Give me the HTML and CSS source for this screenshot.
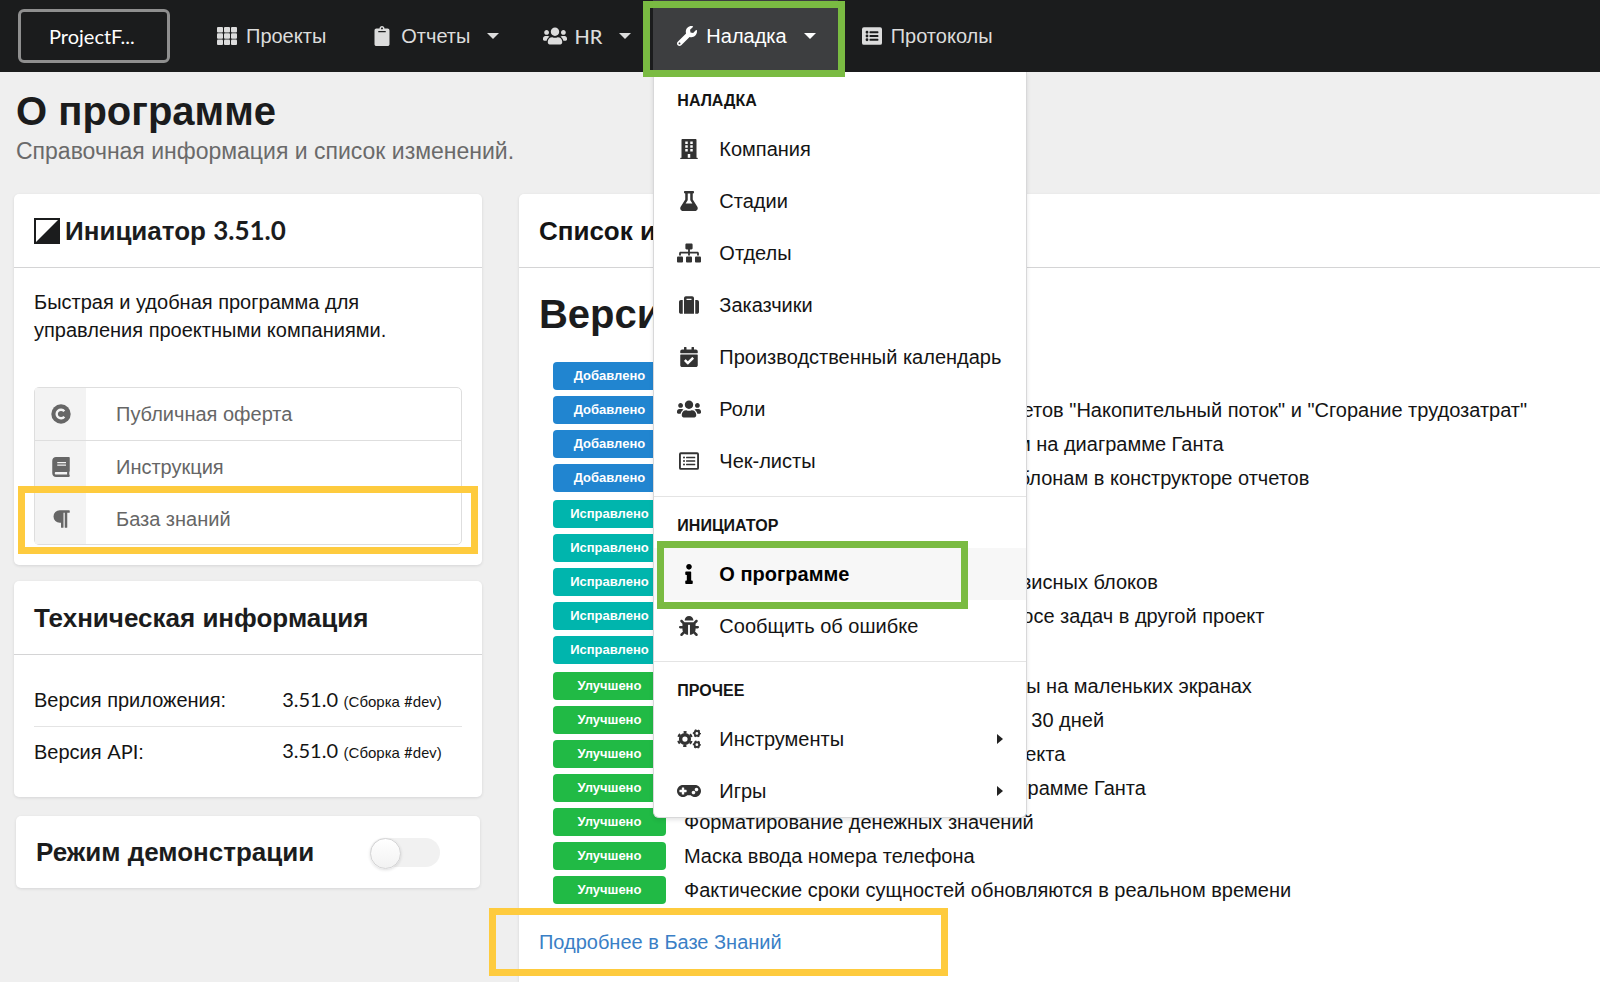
FILE: index.html
```html
<!DOCTYPE html>
<html lang="ru">
<head>
<meta charset="utf-8">
<title>О программе</title>
<link rel="stylesheet" href="styles.css">
</head>
<body>
<svg class="sprite" aria-hidden="true">
  <symbol id="i-grid" viewBox="-2 -1 24 20"><g><rect width="6" height="5.4" rx="1"/><rect x="7" width="6" height="5.4" rx="1"/><rect x="14" width="6" height="5.4" rx="1"/><rect y="6.3" width="6" height="5.4" rx="1"/><rect x="7" y="6.3" width="6" height="5.4" rx="1"/><rect x="14" y="6.3" width="6" height="5.4" rx="1"/><rect y="12.6" width="6" height="5.4" rx="1"/><rect x="7" y="12.6" width="6" height="5.4" rx="1"/><rect x="14" y="12.6" width="6" height="5.4" rx="1"/></g></symbol>
  <symbol id="i-clipboard" viewBox="0 0 384 512"><path d="M384 112v352c0 26.51-21.49 48-48 48H48c-26.51 0-48-21.49-48-48V112c0-26.51 21.49-48 48-48h80c0-35.29 28.71-64 64-64s64 28.71 64 64h80c26.51 0 48 21.49 48 48zM192 40c-13.255 0-24 10.745-24 24s10.745 24 24 24 24-10.745 24-24-10.745-24-24-24m96 114v-20a6 6 0 0 0-6-6H102a6 6 0 0 0-6 6v20a6 6 0 0 0 6 6h180a6 6 0 0 0 6-6z"/></symbol>
  <symbol id="i-users" viewBox="0 0 640 512"><path d="M96 224c35.3 0 64-28.7 64-64s-28.7-64-64-64-64 28.7-64 64 28.7 64 64 64zm448 0c35.3 0 64-28.7 64-64s-28.7-64-64-64-64 28.7-64 64 28.7 64 64 64zm32 32h-64c-17.6 0-33.5 7.1-45.1 18.6 40.3 22.1 68.9 62 75.1 109.4h66c17.7 0 32-14.3 32-32v-32c0-35.3-28.7-64-64-64zm-256 0c61.9 0 112-50.1 112-112S381.9 32 320 32 208 82.1 208 144s50.1 112 112 112zm76.8 32h-8.3c-20.8 10-43.9 16-68.5 16s-47.6-6-68.5-16h-8.3C179.6 288 128 339.6 128 403.2V432c0 26.5 21.5 48 48 48h288c26.5 0 48-21.5 48-48v-28.8c0-63.6-51.6-115.2-115.2-115.2zm-223.7-13.4C161.5 263.1 145.6 256 128 256H64c-35.3 0-64 28.7-64 64v32c0 17.7 14.3 32 32 32h65.9c6.3-47.4 34.9-87.3 75.2-109.4z"/></symbol>
  <symbol id="i-wrench" viewBox="0 0 512 512"><path d="M507.73 109.1c-2.24-9.03-13.54-12.09-20.12-5.51l-74.36 74.36-67.88-11.31-11.31-67.88 74.36-74.36c6.62-6.62 3.43-17.9-5.66-20.16-47.38-11.74-99.55.91-136.58 37.93-39.64 39.64-50.55 97.1-34.05 147.2L18.74 402.76c-24.99 24.99-24.99 65.51 0 90.5 24.99 24.99 65.51 24.99 90.5 0l213.21-213.21c50.12 16.71 107.47 5.68 147.37-34.22 37.07-37.07 49.7-89.32 37.91-136.73zM64 472c-13.25 0-24-10.75-24-24 0-13.26 10.75-24 24-24s24 10.74 24 24c0 13.25-10.75 24-24 24z"/></symbol>
  <symbol id="i-list-solid" viewBox="0 0 512 512"><path fill-rule="evenodd" d="M48 32h416a48 48 0 0 1 48 48v352a48 48 0 0 1-48 48H48a48 48 0 0 1-48-48V80a48 48 0 0 1 48-48zM92 160a36 36 0 1 0 72 0 36 36 0 1 0-72 0zM92 256a36 36 0 1 0 72 0 36 36 0 1 0-72 0zM92 352a36 36 0 1 0 72 0 36 36 0 1 0-72 0zM204 136h204a12 12 0 0 1 12 12v24a12 12 0 0 1-12 12H204a12 12 0 0 1-12-12v-24a12 12 0 0 1 12-12zM204 232h204a12 12 0 0 1 12 12v24a12 12 0 0 1-12 12H204a12 12 0 0 1-12-12v-24a12 12 0 0 1 12-12zM204 328h204a12 12 0 0 1 12 12v24a12 12 0 0 1-12 12H204a12 12 0 0 1-12-12v-24a12 12 0 0 1 12-12z"/></symbol>
  <symbol id="i-list" viewBox="0 0 512 512"><path fill-rule="evenodd" d="M48 32h416a48 48 0 0 1 48 48v352a48 48 0 0 1-48 48H48a48 48 0 0 1-48-48V80a48 48 0 0 1 48-48zM54 80a6 6 0 0 0-6 6v340a6 6 0 0 0 6 6h404a6 6 0 0 0 6-6V86a6 6 0 0 0-6-6z"/><circle cx="128" cy="168" r="26"/><circle cx="128" cy="256" r="26"/><circle cx="128" cy="344" r="26"/><rect x="180" y="150" width="236" height="36" rx="8"/><rect x="180" y="238" width="236" height="36" rx="8"/><rect x="180" y="326" width="236" height="36" rx="8"/></symbol>
  <symbol id="i-building" viewBox="0 0 448 512"><path fill-rule="evenodd" d="M436 480h-20V24c0-13.255-10.745-24-24-24H56C42.745 0 32 10.745 32 24v456H12c-6.627 0-12 5.373-12 12v20h448v-20c0-6.627-5.373-12-12-12zM128 64h64v64h-64zM256 64h64v64h-64zM128 160h64v64h-64zM256 160h64v64h-64zM128 256h64v64h-64zM256 256h64v64h-64zM192 384h64v96h-64z"/></symbol>
  <symbol id="i-flask" viewBox="0 0 448 512"><path d="M437.2 403.5L320 215V64h8c13.3 0 24-10.7 24-24V24c0-13.3-10.7-24-24-24H120c-13.3 0-24 10.7-24 24v16c0 13.3 10.7 24 24 24h8v151L10.8 403.5C-18.5 450.6 15.3 512 70.9 512h306.2c55.7 0 89.4-61.5 60.1-108.5zM137.9 320l48.2-77.6c3.7-5.2 5.8-11.6 5.8-18.4V64h64v160c0 6.9 2.2 13.2 5.8 18.4l48.2 77.6h-172z"/></symbol>
  <symbol id="i-sitemap" viewBox="0 0 640 512"><path d="M128 352H32c-17.67 0-32 14.33-32 32v96c0 17.67 14.33 32 32 32h96c17.67 0 32-14.33 32-32v-96c0-17.67-14.33-32-32-32zm-24-80h192v48h48v-48h192v48h48v-57.59c0-21.17-17.23-38.41-38.41-38.41H344v-64h40c17.67 0 32-14.33 32-32V32c0-17.67-14.33-32-32-32H256c-17.67 0-32 14.33-32 32v96c0 17.67 14.33 32 32 32h40v64H94.41C73.23 224 56 241.23 56 262.41V320h48v-48zm264 80h-96c-17.67 0-32 14.33-32 32v96c0 17.67 14.33 32 32 32h96c17.67 0 32-14.33 32-32v-96c0-17.67-14.33-32-32-32zm240 0h-96c-17.67 0-32 14.33-32 32v96c0 17.67 14.33 32 32 32h96c17.67 0 32-14.33 32-32v-96c0-17.67-14.33-32-32-32z"/></symbol>
  <symbol id="i-suitcase" viewBox="0 0 512 512"><path d="M128 480h256V80c0-26.5-21.5-48-48-48H176c-26.5 0-48 21.5-48 48v400zm64-384h128v32H192V96zm320 80v256c0 26.5-21.5 48-48 48h-48V128h48c26.5 0 48 21.5 48 48zM96 480H48c-26.5 0-48-21.5-48-48V176c0-26.5 21.5-48 48-48h48v352z"/></symbol>
  <symbol id="i-calendar" viewBox="0 0 448 512"><path d="M436 160H12c-6.627 0-12-5.373-12-12v-36c0-26.51 21.49-48 48-48h48V12c0-6.627 5.373-12 12-12h40c6.627 0 12 5.373 12 12v52h128V12c0-6.627 5.373-12 12-12h40c6.627 0 12 5.373 12 12v52h48c26.51 0 48 21.49 48 48v36c0 6.627-5.373 12-12 12zM12 192h424c6.627 0 12 5.373 12 12v260c0 26.51-21.49 48-48 48H48c-26.51 0-48-21.49-48-48V204c0-6.627 5.373-12 12-12zm333.296 95.947l-28.169-28.398c-4.667-4.705-12.265-4.736-16.97-.068L194.12 364.665l-45.98-46.352c-4.667-4.705-12.266-4.736-16.971-.068l-28.397 28.17c-4.705 4.667-4.736 12.265-.068 16.97l82.601 83.269c4.667 4.705 12.265 4.736 16.97.068l142.953-141.805c4.705-4.667 4.736-12.265.068-16.97z"/></symbol>
  <symbol id="i-info" viewBox="0 0 192 512"><path d="M20 424.229h20V279.771H20c-11.046 0-20-8.954-20-20V212c0-11.046 8.954-20 20-20h112c11.046 0 20 8.954 20 20v212.229h20c11.046 0 20 8.954 20 20V492c0 11.046-8.954 20-20 20H20c-11.046 0-20-8.954-20-20v-47.771c0-11.046 8.954-20 20-20zM96 0C56.235 0 24 32.235 24 72s32.235 72 72 72 72-32.235 72-72S135.764 0 96 0z"/></symbol>
  <symbol id="i-bug" viewBox="0 0 512 512"><path d="M511.988 288.9c-.478 17.43-15.217 31.1-32.653 31.1H424v16c0 21.864-4.882 42.584-13.6 61.145l60.228 60.228c12.496 12.497 12.496 32.758 0 45.255-12.498 12.497-32.759 12.496-45.256 0l-54.736-54.736C345.886 467.965 314.351 480 280 480V236c0-6.627-5.373-12-12-12h-24c-6.627 0-12 5.373-12 12v244c-34.351 0-65.886-12.035-90.636-32.108l-54.736 54.736c-12.498 12.497-32.759 12.496-45.256 0-12.496-12.497-12.496-32.758 0-45.255l60.228-60.228C92.882 378.584 88 357.864 88 336v-16H32.666C15.23 320 .491 306.33.013 288.9-.484 270.816 14.028 256 32 256h56v-58.745l-46.628-46.628c-12.496-12.497-12.496-32.758 0-45.255 12.498-12.497 32.758-12.497 45.256 0L141.255 160h229.489l54.627-54.627c12.498-12.497 32.758-12.497 45.256 0 12.496 12.497 12.496 32.758 0 45.255L424 197.255V256h56c17.972 0 32.484 14.816 31.988 32.9zM257 0c-61.856 0-112 50.144-112 112h224C369 50.144 318.856 0 257 0z"/></symbol>
  <symbol id="i-cogs" viewBox="0 0 640 512"><g fill="none" stroke="currentColor"><circle cx="212" cy="256" r="116" stroke-width="92"/><circle cx="212" cy="256" r="182" pathLength="120" stroke-width="60" stroke-dasharray="9 11" stroke-dashoffset="4.5" transform="rotate(-90 212 256)"/><circle cx="530" cy="106" r="62" stroke-width="50"/><circle cx="530" cy="106" r="92" pathLength="120" stroke-width="34" stroke-dasharray="10 10" stroke-dashoffset="5"/><circle cx="530" cy="406" r="62" stroke-width="50"/><circle cx="530" cy="406" r="92" pathLength="120" stroke-width="34" stroke-dasharray="10 10" stroke-dashoffset="5"/></g></symbol>
  <symbol id="i-gamepad" viewBox="0 0 640 512"><path d="M480 96H160C71.6 96 0 167.6 0 256s71.6 160 160 160c44.8 0 85.2-18.4 114.2-48h91.5c29 29.6 69.5 48 114.2 48 88.4 0 160-71.6 160-160S568.4 96 480 96zM256 276c0 6.6-5.4 12-12 12h-52v52c0 6.6-5.4 12-12 12h-40c-6.6 0-12-5.4-12-12v-52H76c-6.6 0-12-5.4-12-12v-40c0-6.6 5.4-12 12-12h52v-52c0-6.6 5.4-12 12-12h40c6.6 0 12 5.4 12 12v52h52c6.6 0 12 5.4 12 12v40zm184 68c-26.5 0-48-21.5-48-48s21.5-48 48-48 48 21.5 48 48-21.5 48-48 48zm80-80c-26.5 0-48-21.5-48-48s21.5-48 48-48 48 21.5 48 48-21.5 48-48 48z"/></symbol>
  <symbol id="i-copyright" viewBox="0 0 20 20"><circle cx="10" cy="10" r="9.7"/><path d="M13.3 12.7a4.3 4.3 0 1 1 0-5.4" fill="none" stroke="#f3f3f3" stroke-width="2.4"/></symbol>
  <symbol id="i-book" viewBox="0 0 448 512"><path d="M448 360V24c0-13.3-10.7-24-24-24H96C43 0 0 43 0 96v320c0 53 43 96 96 96h328c13.3 0 24-10.7 24-24v-16c0-7.5-3.5-14.3-8.9-18.7-4.2-15.4-4.2-59.3 0-74.7 5.4-4.3 8.9-11.1 8.9-18.6zM128 134c0-3.3 2.7-6 6-6h212c3.3 0 6 2.7 6 6v20c0 3.3-2.7 6-6 6H134c-3.3 0-6-2.7-6-6v-20zm0 64c0-3.3 2.7-6 6-6h212c3.3 0 6 2.7 6 6v20c0 3.3-2.7 6-6 6H134c-3.3 0-6-2.7-6-6v-20zm253.4 250H96c-17.7 0-32-14.3-32-32 0-17.6 14.4-32 32-32h285.4c-1.9 17.1-1.9 46.9 0 64z"/></symbol>
  <symbol id="i-paragraph" viewBox="0 0 448 512"><path d="M448 48v32a16 16 0 0 1-16 16h-48v368a16 16 0 0 1-16 16h-32a16 16 0 0 1-16-16V96h-32v368a16 16 0 0 1-16 16h-32a16 16 0 0 1-16-16V352h-32a160 160 0 0 1 0-320h240a16 16 0 0 1 16 16z"/></symbol>
</svg>

<header class="navbar">
  <button class="brand latin" type="button">ProjectF...</button>
  <nav class="nav">
    <a class="nav-item" href="#"><svg class="icon"><use href="#i-grid"/></svg>Проекты</a>
    <button class="nav-item" type="button"><svg class="icon"><use href="#i-clipboard"/></svg>Отчеты<span class="caret"></span></button>
    <button class="nav-item" type="button"><svg class="icon"><use href="#i-users"/></svg><span class="latin">HR</span><span class="caret"></span></button>
    <div class="dropdown">
      <button class="nav-item active" type="button" aria-expanded="true"><svg class="icon"><use href="#i-wrench"/></svg>Наладка<span class="caret"></span></button>
      <div class="menu">
        <section class="menu-group">
          <h2 class="menu-title">Наладка</h2>
          <a class="menu-item" href="#"><svg class="icon"><use href="#i-building"/></svg>Компания</a>
          <a class="menu-item" href="#"><svg class="icon"><use href="#i-flask"/></svg>Стадии</a>
          <a class="menu-item" href="#"><svg class="icon"><use href="#i-sitemap"/></svg>Отделы</a>
          <a class="menu-item" href="#"><svg class="icon"><use href="#i-suitcase"/></svg>Заказчики</a>
          <a class="menu-item" href="#"><svg class="icon"><use href="#i-calendar"/></svg>Производственный календарь</a>
          <a class="menu-item" href="#"><svg class="icon"><use href="#i-users"/></svg>Роли</a>
          <a class="menu-item" href="#"><svg class="icon"><use href="#i-list"/></svg>Чек-листы</a>
        </section>
        <section class="menu-group">
          <h2 class="menu-title">Инициатор</h2>
          <a class="menu-item current" href="#"><svg class="icon"><use href="#i-info"/></svg>О программе<span class="mark mark-current"></span></a>
          <a class="menu-item" href="#"><svg class="icon"><use href="#i-bug"/></svg>Сообщить об ошибке</a>
        </section>
        <section class="menu-group">
          <h2 class="menu-title">Прочее</h2>
          <a class="menu-item" href="#"><svg class="icon"><use href="#i-cogs"/></svg>Инструменты<span class="submenu-caret"></span></a>
          <a class="menu-item" href="#"><svg class="icon"><use href="#i-gamepad"/></svg>Игры<span class="submenu-caret"></span></a>
        </section>
      </div>
      <span class="mark mark-nav"></span>
    </div>
    <a class="nav-item" href="#"><svg class="icon"><use href="#i-list-solid"/></svg>Протоколы</a>
  </nav>
</header>

<main class="page">
  <div class="page-head">
    <h1 class="title">О программе</h1>
    <p class="subtitle">Справочная информация и список изменений.</p>
  </div>
  <div class="columns">
    <aside class="side">
      <section class="card">
        <h2 class="card-title"><svg class="logo" viewBox="0 0 26 26"><rect x="1" y="1" width="24" height="24" fill="#fff" stroke="#1b1c1d" stroke-width="2"/><path d="M26 0v26H0z" fill="#1b1c1d"/></svg><span>Инициатор <span class="latin">3.51.0</span></span></h2>
        <div class="card-body">
          <p class="about">Быстрая и удобная программа для управления проектными компаниями.</p>
          <div class="links">
            <a class="link-row" href="#"><span class="link-icon"><svg class="icon"><use href="#i-copyright"/></svg></span>Публичная оферта</a>
            <a class="link-row" href="#"><span class="link-icon"><svg class="icon"><use href="#i-book"/></svg></span>Инструкция</a>
            <a class="link-row" href="#"><span class="link-icon"><svg class="icon"><use href="#i-paragraph"/></svg></span>База знаний<span class="mark mark-link"></span></a>
          </div>
        </div>
      </section>
      <section class="card">
        <h2 class="card-title">Техническая информация</h2>
        <div class="card-body">
          <table class="versions">
            <tr><th scope="row">Версия приложения:</th><td><span class="latin">3.51.0</span> <small>(Сборка <span class="latin">#dev</span>)</small></td></tr>
            <tr><th scope="row">Версия <span class="latin">API</span>:</th><td><span class="latin">3.51.0</span> <small>(Сборка <span class="latin">#dev</span>)</small></td></tr>
          </table>
        </div>
      </section>
      <section class="card demo">
        <label class="demo-label" for="demo">Режим демонстрации</label>
        <input class="toggle" type="checkbox" role="switch" id="demo">
      </section>
    </aside>

    <section class="card changes">
      <h2 class="card-title">Список изменений</h2>
      <div class="card-body">
        <h3 class="release">Версия <span class="latin">3.51.0</span></h3>
        <ul class="log">
          <li><span class="tag added">Добавлено</span></li>
          <li><span class="tag added">Добавлено</span>Сохранение настроек полей для отчетов "Накопительный поток" и "Сгорание трудозатрат"</li>
          <li><span class="tag added">Добавлено</span>Переход ко всем связанным задачам на диаграмме Ганта</li>
          <li><span class="tag added">Добавлено</span>Настройка доступа к избранным шаблонам в конструкторе отчетов</li>
        </ul>
        <ul class="log">
          <li><span class="tag fixed">Исправлено</span></li>
          <li><span class="tag fixed">Исправлено</span></li>
          <li><span class="tag fixed">Исправлено</span>Отображение списка доступных сервисных блоков</li>
          <li><span class="tag fixed">Исправлено</span>Ошибка сохранения роли при переносе задач в другой проект</li>
          <li><span class="tag fixed">Исправлено</span></li>
        </ul>
        <ul class="log">
          <li><span class="tag improved">Улучшено</span>Внешний вид всей диаграммы работы на маленьких экранах</li>
          <li><span class="tag improved">Улучшено</span>Периоды отчета по рабочим часам в 30 дней</li>
          <li><span class="tag improved">Улучшено</span>Карточка после создания нового проекта</li>
          <li><span class="tag improved">Улучшено</span>Отображение периода задач на диаграмме Ганта</li>
          <li><span class="tag improved">Улучшено</span>Форматирование денежных значений</li>
          <li><span class="tag improved">Улучшено</span>Маска ввода номера телефона</li>
          <li><span class="tag improved">Улучшено</span>Фактические сроки сущностей обновляются в реальном времени</li>
        </ul>
        <div class="more"><a href="#">Подробнее в Базе Знаний</a><span class="mark mark-more"></span></div>
      </div>
    </section>
  </div>
</main>
</body>
</html>
```

FILE: styles.css
```css
* { box-sizing: border-box; }

body {
  margin: 0;
  min-height: 100vh;
  display: flex;
  flex-direction: column;
  background: #efefef;
  color: #1b1c1d;
  font: 20px/28px "Liberation Sans", Arial, sans-serif;
}

h1, h2, h3, p, ul { margin: 0; padding: 0; }
a { color: inherit; text-decoration: none; }
button { font: inherit; color: inherit; background: none; border: 0; padding: 0; cursor: pointer; }
.sprite { display: none; }
.latin { font-family: Lato, "Liberation Sans", sans-serif; }
.icon { width: 24px; height: 20px; flex: none; fill: currentColor; }

/* Navigation */
.navbar {
  display: flex;
  align-items: center;
  height: 72px;
  padding-left: 18px;
  background: #1b1c1d;
  color: #dcdcdc;
}
.brand {
  width: 152px;
  height: 54px;
  margin-right: 23px;
  padding-left: 28px;
  border: 3px solid #8f8f8f;
  border-radius: 6px;
  color: #fff;
  text-align: left;
}
.nav { display: flex; align-self: stretch; }
.nav-item {
  display: flex;
  align-items: center;
  gap: 7px;
  height: 72px;
  padding: 0 22px;
}
.nav-item.active { background: #3d3e40; color: #fff; }
.nav .latin { font-weight: 500; }
.caret {
  margin-left: 10px;
  border: 6px solid transparent;
  border-top-color: currentColor;
  border-bottom: 0;
}
.dropdown { position: relative; z-index: 2; }

.menu {
  position: absolute;
  top: 100%;
  left: 0;
  min-width: 374px;
  background: #fff;
  color: #141414;
  border: 1px solid #d8d8d9;
  border-top: 0;
  border-radius: 0 0 6px 6px;
  box-shadow: 0 2px 4px rgba(34, 36, 38, .12);
}
.menu-group + .menu-group { border-top: 1px solid #e4e4e4; }
.menu-group:not(:last-child) { padding-bottom: 9px; }
.menu-title {
  padding: 19px 23px 12px;
  font-size: 16px;
  line-height: 20px;
  text-transform: uppercase;
}
.menu-item {
  position: relative;
  display: flex;
  align-items: center;
  gap: 18px;
  height: 52px;
  padding: 0 23px;
  white-space: nowrap;
}
.menu-item .icon { color: #333; }
.menu-item.current { background: #f7f7f7; color: #000; font-weight: bold; }
.menu-item.current .icon { color: #000; }
.submenu-caret {
  margin-left: auto;
  border: 5px solid transparent;
  border-left: 6px solid #222;
  border-right: 0;
}

/* Highlight frames over the content */
.mark { position: absolute; border: 7px solid #7abb42; pointer-events: none; }
.mark-nav { inset: 1px -7px -5px -10px; }
.mark-current { inset: -7px 58px -9px 3px; }
.mark-link, .mark-more { border-color: #fecb3e; }
.mark-link { inset: -7px -17px -10px -17px; }
.mark-more { top: 4px; left: -50px; width: 459px; height: 68px; }

/* Page */
.page { flex: 1; display: flex; flex-direction: column; padding: 15px 0 0 14px; }
.page-head { padding-left: 2px; margin-bottom: 27px; }
.title { font-size: 40px; line-height: 48px; }
.subtitle { font-size: 23px; line-height: 32px; color: #6a6a6a; }
.columns {
  flex: 1;
  display: grid;
  grid-template-columns: 29fr 67fr;
  gap: 37px;
}
.side { display: flex; flex-direction: column; gap: 16px; }

.card { background: #fff; border-radius: 5px; box-shadow: 0 1px 3px rgba(34, 36, 38, .12); }
.card-title {
  display: flex;
  align-items: center;
  gap: 5px;
  height: 74px;
  padding: 0 20px;
  border-bottom: 1px solid #d4d4d5;
  font-size: 26px;
}
.card-body { padding: 20px; }
.logo { width: 26px; height: 26px; }
.about { margin-bottom: 43px; color: #141414; }

.links { border: 1px solid #dedede; border-radius: 5px; color: #666; }
.link-row {
  position: relative;
  display: flex;
  align-items: center;
  gap: 30px;
  height: 52px;
}
.link-row + .link-row { border-top: 1px solid #dedede; }
.link-icon {
  display: grid;
  place-items: center;
  align-self: stretch;
  width: 51px;
  background: #f3f3f3;
}

.versions { width: 100%; border-collapse: collapse; color: #141414; }
.versions th { width: 58%; font-weight: normal; text-align: left; }
.versions th, .versions td { height: 51px; padding: 0; white-space: nowrap; }
.versions tr + tr > * { border-top: 1px solid #e4e4e4; }
.versions small { font-size: 15px; }

.demo {
  display: flex;
  align-items: center;
  justify-content: space-between;
  height: 72px;
  margin: 3px 2px 0;
  padding: 0 40px 0 20px;
}
.demo-label { font-size: 26px; font-weight: bold; }
.toggle {
  appearance: none;
  width: 70px;
  height: 29px;
  margin: 0;
  border-radius: 15px;
  background: #f1f1f1;
}
.toggle::before {
  content: "";
  display: block;
  width: 29px;
  height: 29px;
  border: 1px solid #d4d4d5;
  border-radius: 50%;
  background: linear-gradient(#fff, #f2f2f2);
  box-shadow: 0 1px 3px rgba(34, 36, 38, .15);
}

/* Change log */
.changes { border-radius: 5px 0 0 0; color: #141414; }
.changes .card-body { padding-bottom: 0; }
.release { margin-bottom: 23px; font-size: 40px; line-height: 50px; color: #1b1c1d; }
.log { list-style: none; padding-left: 14px; }
.log + .log { margin-top: 2px; }
.log li { display: flex; align-items: center; gap: 18px; height: 34px; padding-bottom: 6px; white-space: nowrap; }
.tag {
  width: 113px;
  border-radius: 4px;
  color: #fff;
  font-size: 13px;
  font-weight: bold;
  line-height: 28px;
  text-align: center;
}
.added { background: #2185d0; }
.fixed { background: #00b5ad; }
.improved { background: #21ba45; }
.more { position: relative; padding: 18px 0 20px; color: #3a7fc6; }
.mark-more { top: -2px; }
```
